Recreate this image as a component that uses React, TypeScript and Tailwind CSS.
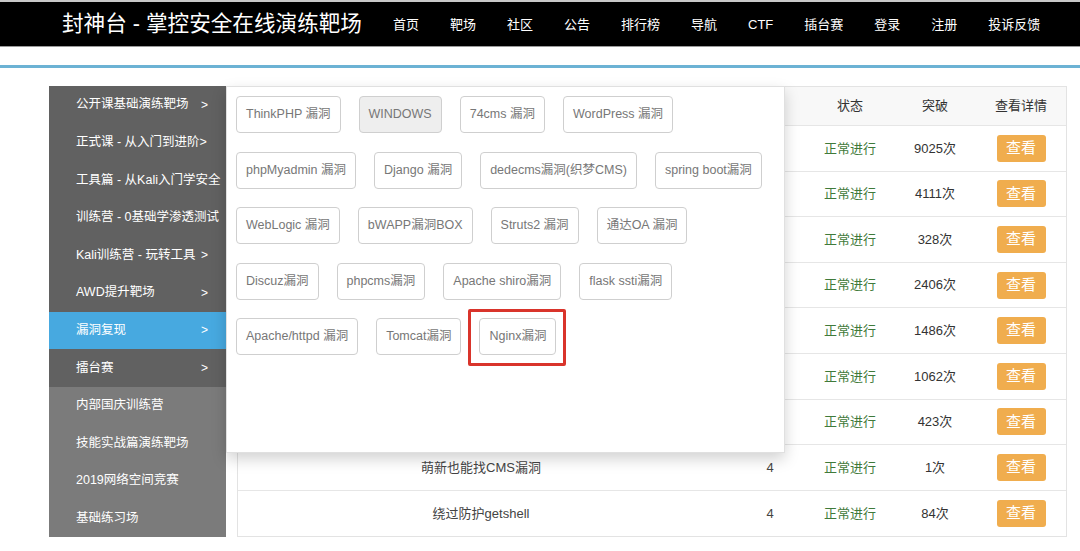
import React from 'react';

const navItems = ['首页', '靶场', '社区', '公告', '排行榜', '导航', 'CTF', '插台赛', '登录', '注册', '投诉反馈'];

const sideItems = [
  { label: '公开课基础演练靶场', arrow: true, tone: 'dark' },
  { label: '正式课 - 从入门到进阶>', arrow: false, tone: 'dark' },
  { label: '工具篇 - 从Kali入门学安全', arrow: false, tone: 'dark' },
  { label: '训练营 - 0基础学渗透测试', arrow: false, tone: 'dark' },
  { label: 'Kali训练营 - 玩转工具', arrow: true, tone: 'dark' },
  { label: 'AWD提升靶场', arrow: true, tone: 'dark' },
  { label: '漏洞复现', arrow: true, tone: 'active' },
  { label: '擂台赛', arrow: true, tone: 'dark' },
  { label: '内部国庆训练营', arrow: false, tone: 'light' },
  { label: '技能实战篇演练靶场', arrow: false, tone: 'light' },
  { label: '2019网络空间竞赛', arrow: false, tone: 'light' },
  { label: '基础练习场', arrow: false, tone: 'light' },
];

const tagRows = [
  ['ThinkPHP 漏洞', 'WINDOWS', '74cms 漏洞', 'WordPress 漏洞'],
  ['phpMyadmin 漏洞', 'Django 漏洞', 'dedecms漏洞(织梦CMS)', 'spring boot漏洞'],
  ['WebLogic 漏洞', 'bWAPP漏洞BOX', 'Struts2 漏洞', '通达OA 漏洞'],
  ['Discuz漏洞', 'phpcms漏洞', 'Apache shiro漏洞', 'flask ssti漏洞'],
  ['Apache/httpd 漏洞', 'Tomcat漏洞', 'Nginx漏洞'],
];

// rows 1-7 sit under the open menu, only the last two show their names
const rows = [
  { name: '', level: '', count: '9025次' },
  { name: '', level: '', count: '4111次' },
  { name: '', level: '', count: '328次' },
  { name: '', level: '', count: '2406次' },
  { name: '', level: '', count: '1486次' },
  { name: '', level: '', count: '1062次' },
  { name: '', level: '', count: '423次' },
  { name: '萌新也能找CMS漏洞', level: '4', count: '1次' },
  { name: '绕过防护getshell', level: '4', count: '84次' },
];

const font = { fontFamily: '"Liberation Sans", "Noto Sans CJK SC", sans-serif' };

export default function App() {
  return (
    <div className="w-[1080px] h-[551px] bg-white overflow-hidden" style={font}>
      {/* top bar */}
      <div className="h-[47px] bg-black border-t-2 border-[#c8c8c8] border-b border-b-[#9a9a9a] flex items-center pl-[62px] gap-[31px]">
        <span className="text-[21.6px] text-white leading-none">封神台 - 掌控安全在线演练靶场</span>
        {navItems.map((n) => (
          <span key={n} className="text-[13px] text-white leading-none">
            {n}
          </span>
        ))}
      </div>
      <div className="h-[18px]" />
      <div className="h-[3px] bg-[#6cb2d4]" />

      <div className="relative flex pl-[49px] pt-[18px]">
        {/* side menu */}
        <div className="w-[177px] flex flex-col shrink-0">
          {sideItems.map((s) => (
            <div
              key={s.label}
              className={
                'h-[37.6px] flex items-center pl-[27px] pr-[18px] text-[12.5px] text-white whitespace-nowrap ' +
                (s.tone === 'active' ? 'bg-[#47a9e0]' : s.tone === 'light' ? 'bg-[#7b7b7b]' : 'bg-[#616161]')
              }
            >
              <span className="flex-1">{s.label}</span>
              {s.arrow && <span className="text-[12px]">&gt;</span>}
            </div>
          ))}
        </div>

        {/* table */}
        <div className="ml-[11px] w-[830px] border border-[#e3e3e3] self-start">
          <div className="h-[39px] flex items-center bg-[#f8f8f8] text-[13px] text-[#333] border-b border-[#e6e6e6]">
            <div className="w-[486px]" />
            <div className="w-[92px]" />
            <div className="w-[68px] text-center">状态</div>
            <div className="w-[102px] text-center">突破</div>
            <div className="w-[70px] text-center whitespace-nowrap">查看详情</div>
          </div>
          {rows.map((r, i) => (
            <div
              key={i}
              className={'h-[45.6px] flex items-center text-[13px] ' + (i < rows.length - 1 ? 'border-b border-[#e6e6e6]' : '')}
            >
              <div className="w-[486px] text-center text-[#444]">{r.name}</div>
              <div className="w-[92px] text-center text-[#444]">{r.level}</div>
              <div className="w-[68px] text-center text-[#3f7a3a]">正常进行</div>
              <div className="w-[102px] text-center text-[#333]">{r.count}</div>
              <div className="w-[70px] flex justify-center">
                <span className="w-[49px] h-[27px] shrink-0 rounded-[3px] bg-[#f0ad4e] text-white text-[15px] flex items-center justify-center">
                  查看
                </span>
              </div>
            </div>
          ))}
        </div>

        {/* dropdown panel */}
        <div className="absolute left-[226px] top-[18px] w-[559px] h-[367px] bg-white border border-[#e0e0e0] shadow-[0_6px_14px_rgba(0,0,0,0.18)] pl-[9px] pt-[9px] flex flex-col gap-[18.5px]">
          {tagRows.map((row, ri) => (
            <div key={ri} className="flex gap-[18px]">
              {row.map((t) => (
                <div
                  key={t}
                  className={
                    'relative h-[37px] px-[9px] flex items-center rounded-[4px] border border-[#cfcfcf] text-[12.5px] text-[#777] whitespace-nowrap ' +
                    (t === 'WINDOWS' ? 'bg-[#eeeeee]' : 'bg-white')
                  }
                >
                  {t}
                  {t === 'Nginx漏洞' && (
                    <span className="absolute -left-[12px] -right-[11px] -top-[10px] -bottom-[12px] border-[3px] border-[#d9342b] rounded-[2px]" />
                  )}
                </div>
              ))}
            </div>
          ))}
        </div>
      </div>
    </div>
  );
}
